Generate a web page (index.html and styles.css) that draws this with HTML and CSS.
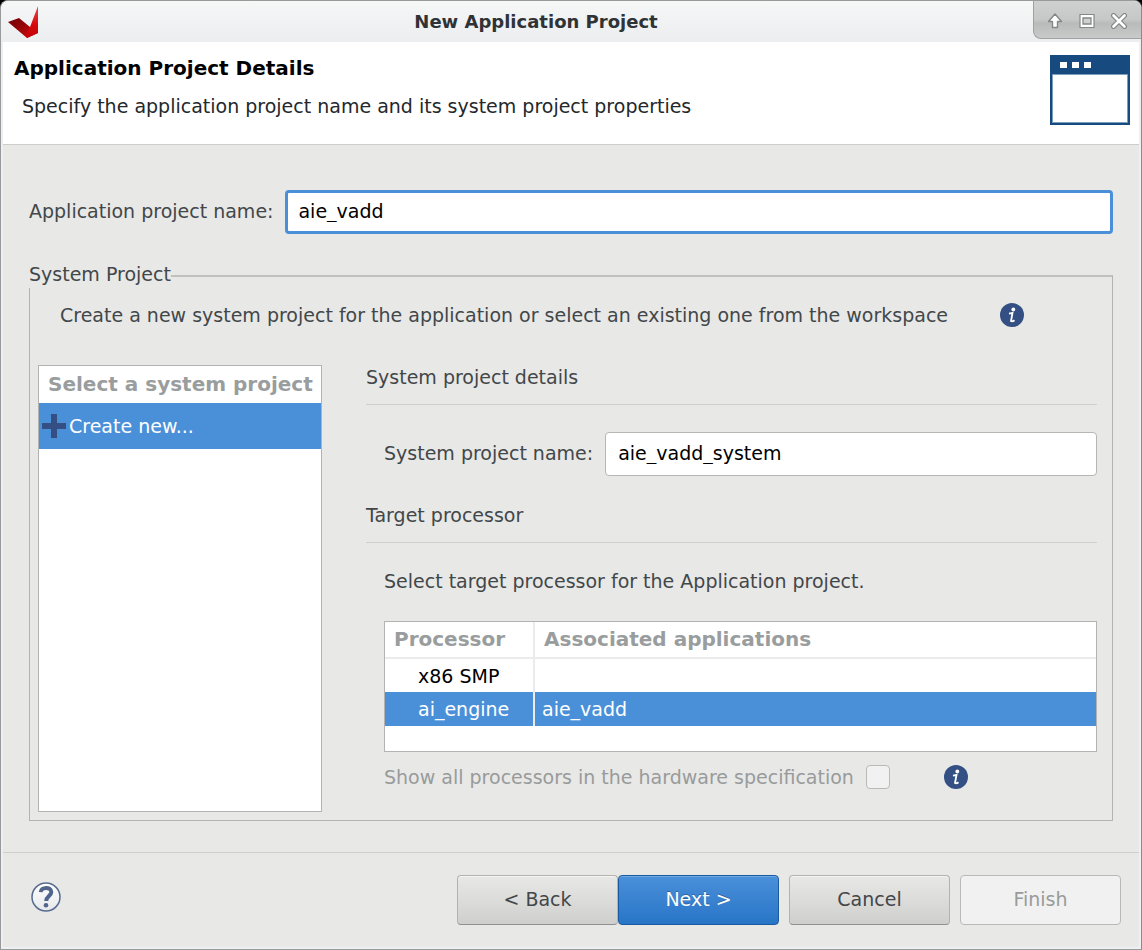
FILE: index.html
```html
<!DOCTYPE html>
<html lang="en">
<head>
<meta charset="utf-8">
<title>New Application Project</title>
<link rel="stylesheet" href="styles.css">
</head>
<body>
<div class="window">
  <header class="titlebar">
    <svg class="logo" viewBox="0 0 32 32" aria-hidden="true">
      <defs>
        <linearGradient id="dark" x1="0" y1="0" x2="1" y2="1"><stop offset="0" stop-color="#6e0307"/><stop offset=".5" stop-color="#9c0508"/><stop offset="1" stop-color="#e80a10"/></linearGradient>
        <linearGradient id="bright" x1="0" y1="0" x2="0" y2="1"><stop offset="0" stop-color="#e84a4c"/><stop offset=".6" stop-color="#d8060c"/><stop offset="1" stop-color="#c00308"/></linearGradient>
      </defs>
      <path fill="url(#dark)" d="M0 16 11 12 22 21 30 27 19 32Z"/>
      <path fill="url(#bright)" d="M30 0 30 27 19 32 18 29 22 21Z"/>
    </svg>
    <div class="title">New Application Project</div>
    <div class="window-controls">
      <button class="window-button" type="button" aria-label="Roll up">
        <svg viewBox="0 0 16 16"><path d="M8 1 14.500 8.500H10.500V14.500H5.500V8.500H1.500Z" fill="#fff" stroke="#858787" stroke-width="1.400" stroke-linejoin="round"/></svg>
      </button>
      <button class="window-button" type="button" aria-label="Maximize">
        <svg viewBox="0 0 16 16"><path d="M1 1.500H15V14.500H1Z" fill="#fff" stroke="#858787" stroke-width="1.200"/><path d="M4 5H12V11H4Z" fill="#cfd0d0" stroke="#858787" stroke-width="1.300"/></svg>
      </button>
      <button class="window-button" type="button" aria-label="Close">
        <svg viewBox="0 0 16 16"><path d="M2.500 2.500 13.500 13.500M13.500 2.500 2.500 13.500" stroke="#858787" stroke-width="5" stroke-linecap="round"/><path d="M2.500 2.500 13.500 13.500M13.500 2.500 2.500 13.500" stroke="#fff" stroke-width="2.600" stroke-linecap="round"/></svg>
      </button>
    </div>
  </header>

  <div class="dialog">
    <div class="banner">
      <div class="banner-text">
        <h1 class="banner-title">Application Project Details</h1>
        <p class="banner-description">Specify the application project name and its system project properties</p>
      </div>
      <svg class="banner-icon" viewBox="0 0 82 72" aria-hidden="true">
        <path fill="#174b80" d="M1 1H81V71H1Z"/>
        <path fill="#fff" stroke="#7d9dbd" d="M3.500 20.500H78.500V68.500H3.500Z"/>
        <path fill="#fff" d="M11 8H18V14H11ZM23 8H30V14H23ZM35 8H42V14H35Z"/>
      </svg>
    </div>

    <main class="content">
      <div class="field">
        <label for="app-name">Application project name:</label>
        <input class="text-input" id="app-name" type="text" value="aie_vadd">
      </div>

      <fieldset class="group">
        <legend>System Project</legend>
        <div class="hint">
          <span>Create a new system project for the application or select an existing one from the workspace</span>
          <svg class="info" viewBox="0 0 24 24" role="img" aria-label="Information"><circle cx="12" cy="12" r="12" fill="#334f84"/><circle cx="13.300" cy="6.500" r="1.900" fill="#fff"/><path d="M9 10.700 12.500 10 11 18Q12.500 18.800 14.500 17.200" fill="none" stroke="#fff" stroke-width="1.800"/></svg>
        </div>

        <div class="columns">
          <div class="list">
            <table class="project-table">
              <thead><tr><th>Select a system project</th></tr></thead>
              <tbody><tr class="selected"><td><div class="create"><svg class="plus" viewBox="0 0 24 24" aria-hidden="true"><path d="M9 0H15V9H24V15H15V24H9V15H0V9H9Z" fill="#334f84"/></svg>Create new...</div></td></tr></tbody>
            </table>
          </div>

          <div class="details">
            <h2 class="section-title">System project details</h2>
            <div class="section">
              <div class="field">
                <label for="system-name">System project name:</label>
                <input class="text-input" id="system-name" type="text" value="aie_vadd_system">
              </div>
            </div>
            <h2 class="section-title">Target processor</h2>
            <div class="section">
              <p class="note">Select target processor for the Application project.</p>
              <div class="processors">
                <table class="processor-table">
                  <thead><tr><th class="name-column">Processor</th><th>Associated applications</th></tr></thead>
                  <tbody>
                    <tr><td class="name-column">x86 SMP</td><td></td></tr>
                    <tr class="selected"><td class="name-column">ai_engine</td><td>aie_vadd</td></tr>
                  </tbody>
                </table>
              </div>
              <div class="show-all">
                <label for="show-all">Show all processors in the hardware specification</label>
                <input class="check" id="show-all" type="checkbox" disabled>
                <svg class="info" viewBox="0 0 24 24" role="img" aria-label="Information"><circle cx="12" cy="12" r="12" fill="#334f84"/><circle cx="13.300" cy="6.500" r="1.900" fill="#fff"/><path d="M9 10.700 12.500 10 11 18Q12.500 18.800 14.500 17.200" fill="none" stroke="#fff" stroke-width="1.800"/></svg>
              </div>
            </div>
          </div>
        </div>
      </fieldset>
    </main>

    <footer class="footer">
      <button class="help" type="button" aria-label="Help">
        <svg viewBox="0 0 30 30"><defs><linearGradient id="disc" x1="0" y1="0" x2="0" y2="1"><stop offset="0" stop-color="#fff"/><stop offset="1" stop-color="#e6e8ea"/></linearGradient></defs><circle cx="15" cy="15" r="14" fill="url(#disc)" stroke="#566b90" stroke-width="1.500"/><path d="M9.700 10.200C10 4.500 20.300 4.500 20.300 10C20.300 14 15.200 14 15.200 19" fill="none" stroke="#50648c" stroke-width="4"/><circle cx="15" cy="23.300" r="2.300" fill="#50648c"/></svg>
      </button>
      <div class="actions">
        <div class="navigation">
          <button class="button" type="button">&lt; Back</button>
          <button class="button primary" type="button">Next &gt;</button>
        </div>
        <button class="button" type="button">Cancel</button>
        <button class="button" type="button" disabled>Finish</button>
      </div>
    </footer>
  </div>
</div>
</body>
</html>
```
FILE: styles.css
```css
* {
  box-sizing: border-box;
}

body {
  margin: 0;
  background: #000;
  color: #42474a;
  font: 19px/24px "DejaVu Sans", sans-serif;
}

h1, h2, p {
  margin: 0;
  font-size: 19px;
}

button, input {
  font: inherit;
}

svg {
  display: block;
}

.window {
  display: flex;
  flex-direction: column;
  min-height: 100vh;
  border: 1px solid #999a9b;
  border-right-color: #8a8b8b;
  border-radius: 8px 8px 0 0;
  background: #eeeff0;
  overflow: hidden;
}

.titlebar {
  display: grid;
  grid-template-columns: 38px 1fr 108px;
  height: 41px;
  background: linear-gradient(#f6f7f7, #ebedef);
}

.logo {
  width: 32px;
  height: 32px;
  margin: 5px 0 0 7px;
}

.title {
  padding-top: 9px;
  color: #2f3336;
  font-size: 18px;
  font-weight: bold;
  text-align: center;
}

.window-controls {
  display: flex;
  align-items: center;
  justify-content: space-between;
  height: 38px;
  padding: 2px 14px 0 13px;
  border: 1px solid #9fa1a2;
  border-width: 0 0 1px 1px;
  border-bottom-left-radius: 8px;
  background: linear-gradient(#cfd0d0, #c6c7c7 50%, #b9baba 60%, #c9caca);
}

.window-button {
  width: 16px;
  padding: 0;
  border: 0;
  background: none;
}

.dialog {
  display: flex;
  flex: 1;
  flex-direction: column;
  margin: 0 2px 2px;
  background: #e8e8e6;
}

.banner {
  display: flex;
  justify-content: space-between;
  padding: 12px 8px 18px 11px;
  border-bottom: 1px solid #cdcdcb;
  background: #fff;
}

.banner-title {
  margin-top: 2px;
  color: #000;
  font-size: 20px;
}

.banner-description {
  margin: 14px 0 0 8px;
  color: #24282b;
}

.banner-icon {
  flex: none;
  width: 82px;
  height: 72px;
}

.content {
  flex: 1;
  padding: 45px 26px 30px;
}

.field {
  display: flex;
  align-items: center;
  gap: 12px;
}

.field label {
  padding-bottom: 2px;
}

.text-input {
  flex: 1;
  min-width: 0;
  height: 44px;
  padding: 0 12px 2px;
  border: 1px solid #b6b6b3;
  border-radius: 4px;
  outline: 0;
  background: #fff;
  color: #000;
}

#app-name {
  padding: 0 10px 2px;
  border: 3px solid #4a90d9;
}

.group {
  min-width: 0;
  margin: 30px 0 0;
  padding: 15px 15px 8px 8px;
  border: 1px solid #b3b3b1;
  border-top: 2px solid #c0c0be;
}

.group legend {
  margin-left: -9px;
  padding: 0 0 4px;
  background: #e8e8e6;
  line-height: 20px;
}

.hint {
  display: flex;
  gap: 52px;
  margin-left: 22px;
}

.info {
  flex: none;
  width: 24px;
  height: 24px;
}

.columns {
  display: grid;
  grid-template-columns: 284px 1fr;
  gap: 44px;
  margin-top: 38px;
}

.list, .processors {
  border: 1px solid #b3b3b1;
  background: #fff;
}

table {
  width: 100%;
  border-collapse: collapse;
}

th, td {
  padding: 0;
  text-align: left;
}

th {
  color: #999d9e;
  font-size: 20px;
}

.project-table th {
  height: 37px;
  padding: 0 0 2px 9px;
  white-space: nowrap;
}

.project-table td {
  height: 46px;
}

.selected {
  background: #4a90d9;
  color: #fff;
}

.create {
  display: flex;
  gap: 3px;
  margin-left: 3px;
}

.plus {
  width: 24px;
  height: 24px;
}

.details {
  padding-bottom: 23px;
}

.section-title {
  padding-bottom: 15px;
  border-bottom: 1px solid #cfcfcd;
  font-weight: normal;
}

.section {
  padding: 27px 0 0 18px;
}

.section + .section-title {
  margin-top: 27px;
}

.section .note {
  margin: -1px 0 28px;
}

.processors {
  min-height: 131px;
}

.processor-table th {
  height: 36px;
  padding: 0 0 2px 9px;
  border-bottom: 2px solid #ebebeb;
}

.processor-table td {
  height: 34px;
  padding-left: 7px;
}

.processor-table tbody tr:first-child {
  color: #000;
}

.processor-table .name-column {
  width: 149px;
  border-right: 2px solid #ebebeb;
}

.processor-table td.name-column {
  padding-left: 33px;
}

.show-all {
  display: flex;
  align-items: center;
  gap: 12px;
  margin-top: 13px;
  color: #989b9b;
}

.check {
  appearance: none;
  width: 24px;
  height: 24px;
  margin: 0;
  border: 1px solid #b9b9b7;
  border-radius: 4px;
  background: #f1f1f1;
}

.show-all .info {
  margin-left: 42px;
}

.footer {
  display: flex;
  align-items: center;
  justify-content: space-between;
  padding: 22px 18px 22px 28px;
  border-top: 1px solid #cfcfcd;
}

.help {
  width: 30px;
  margin-bottom: 6px;
  padding: 0;
  border: 0;
  background: none;
}

.actions {
  display: flex;
  gap: 10px;
}

.navigation {
  display: flex;
}

.button {
  width: 161px;
  height: 50px;
  padding: 0 0 2px;
  border: 1px solid #b2b2af;
  border-bottom-color: #8f908f;
  border-radius: 4px;
  background: linear-gradient(#e8e8e6, #cfcfcd);
  box-shadow: inset 0 1px #f5f5f4;
  color: #42474a;
}

.button.primary {
  border-color: #1c5a9e;
  background: linear-gradient(#4a90d9, #2875c7);
  box-shadow: inset 0 1px #70aae4;
  color: #fff;
  text-shadow: 0 -1px #2d62a0;
}

.button:disabled {
  border-color: #b9b9b7;
  background: #f1f1f1;
  box-shadow: none;
  color: #989b9b;
}
```
